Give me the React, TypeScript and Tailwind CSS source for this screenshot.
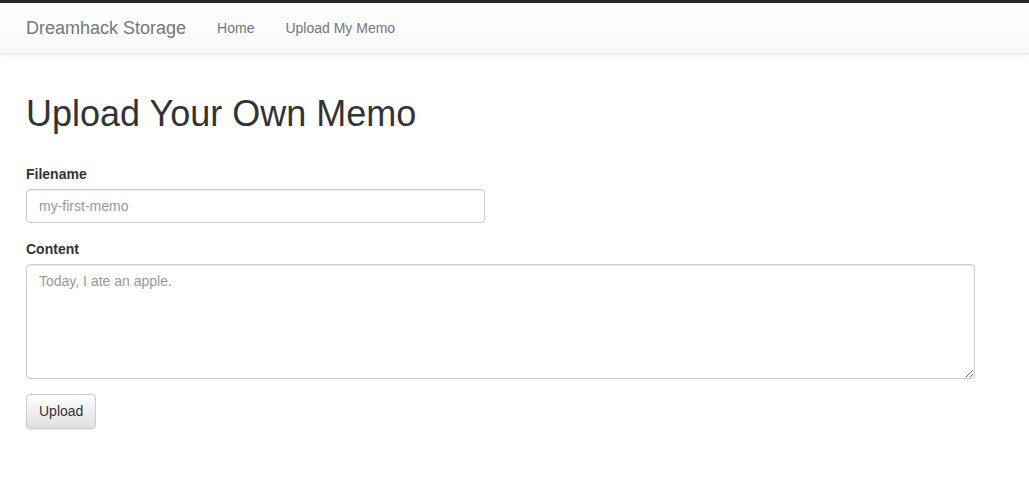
export default function App() {
  return (
    <div className="min-h-[486px] bg-white font-['Liberation_Sans',Arial,sans-serif] text-[14px] text-[#333]">
      {/* Top bar */}
      <div className="h-[3px] bg-[#2b2b2b]" />

      {/* Navbar */}
      <nav className="h-[51px] border-b border-[#e7e7e7] bg-gradient-to-b from-white to-[#f8f8f8] shadow-[0_1px_5px_rgba(0,0,0,0.075)]">
        <div className="flex h-[50px] items-center pl-[11px]">
          <a className="px-[15px] text-[18px] leading-[20px] text-[#777]">Dreamhack Storage</a>
          <a className="px-[15px] pl-[16px] leading-[20px] text-[#777]">Home</a>
          <a className="px-[15px] pl-[16px] leading-[20px] text-[#777]">Upload My Memo</a>
        </div>
      </nav>

      {/* Main */}
      <div className="px-[26px]">
        <h1 className="mt-[40px] mb-[30px] text-[36px] leading-[39.6px] font-normal">Upload Your Own Memo</h1>

        <form onSubmit={(e) => e.preventDefault()}>
          <div className="mb-[16px]">
            <label className="mb-[5px] block font-bold leading-[20px]">Filename</label>
            <input
              type="text"
              placeholder="my-first-memo"
              className="block h-[34px] w-[459px] rounded-[4px] border border-[#ccc] px-[12px] py-[6px] text-[14px] text-[#555] shadow-[inset_0_1px_1px_rgba(0,0,0,0.075)] outline-none placeholder:text-[#999]"
            />
          </div>

          <div className="mb-[15px]">
            <label className="mb-[5px] block font-bold leading-[20px]">Content</label>
            <textarea
              placeholder="Today, I ate an apple."
              className="block h-[115px] w-[949px] rounded-[4px] border border-[#ccc] px-[12px] py-[6px] text-[14px] leading-[20px] text-[#555] shadow-[inset_0_1px_1px_rgba(0,0,0,0.075)] outline-none placeholder:text-[#999]"
            />
          </div>

          <button
            type="submit"
            className="h-[35px] rounded-[4px] border border-[#ccc] bg-gradient-to-b from-white to-[#e0e0e0] px-[12px] text-[14px] leading-[20px] text-[#333] shadow-[inset_0_1px_0_rgba(255,255,255,0.15),0_1px_1px_rgba(0,0,0,0.075)]"
          >
            Upload
          </button>
        </form>
      </div>
    </div>
  );
}
